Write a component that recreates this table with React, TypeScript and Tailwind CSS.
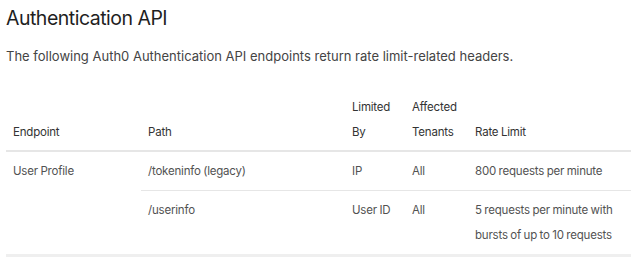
const rows = [
  { path: "/tokeninfo (legacy)", limitedBy: "IP", tenants: "All", limit: "800 requests per minute" },
  { path: "/userinfo", limitedBy: "User ID", tenants: "All", limit: "5 requests per minute with bursts of up to 10 requests" },
];

const cell = "pl-[7px] pt-[7px] pb-[6px] align-top";
const divider = "border-b border-[#e6e6e6]";

export default function App() {
  return (
    <div className="h-[259px] w-[640px] overflow-hidden bg-white px-[6px] font-['Inter',sans-serif]">
      <h1 className="pt-[4px] text-[19.5px] leading-[28px] font-normal tracking-[-0.5px] text-[#1f1f1f]">
        Authentication API
      </h1>
      <p className="mt-[14px] text-[13px] leading-[20px] text-[#444]">
        The following Auth0 Authentication API endpoints return rate limit-related headers.
      </p>

      <table className="mt-[29px] w-[625px] table-fixed border-collapse text-[11.5px] leading-[25px] tracking-[-0.2px] [word-spacing:-0.5px] text-[#525252]">
        <colgroup>
          <col className="w-[135px]" />
          <col className="w-[204px]" />
          <col className="w-[60px]" />
          <col className="w-[63px]" />
          <col className="w-[163px]" />
        </colgroup>
        <thead>
          <tr className="border-b-2 border-[#e6e6e6] text-[#333]">
            <th className="pl-[7px] pb-[5px] text-left align-bottom font-normal">Endpoint</th>
            <th className="pl-[7px] pb-[5px] text-left align-bottom font-normal">Path</th>
            <th className="pl-[7px] pb-[5px] text-left align-bottom font-normal">Limited By</th>
            <th className="pl-[7px] pb-[5px] text-left align-bottom font-normal">Affected Tenants</th>
            <th className="pl-[7px] pb-[5px] text-left align-bottom font-normal">Rate Limit</th>
          </tr>
        </thead>
        <tbody>
          {rows.map((r, i) => {
            const first = i === 0;
            return (
              <tr key={r.path} className={i === rows.length - 1 ? "border-b-[3px] border-[#efefef]" : ""}>
                {first && (
                  <td rowSpan={rows.length} className="pl-[7px] pt-[7px] align-top">
                    User Profile
                  </td>
                )}
                <td className={`${cell} ${first ? divider : ""}`}>{r.path}</td>
                <td className={`${cell} ${first ? divider : ""}`}>{r.limitedBy}</td>
                <td className={`${cell} ${first ? divider : ""}`}>{r.tenants}</td>
                <td className={`${cell} pr-[4px] ${first ? divider : ""}`}>{r.limit}</td>
              </tr>
            );
          })}
        </tbody>
      </table>
    </div>
  );
}
